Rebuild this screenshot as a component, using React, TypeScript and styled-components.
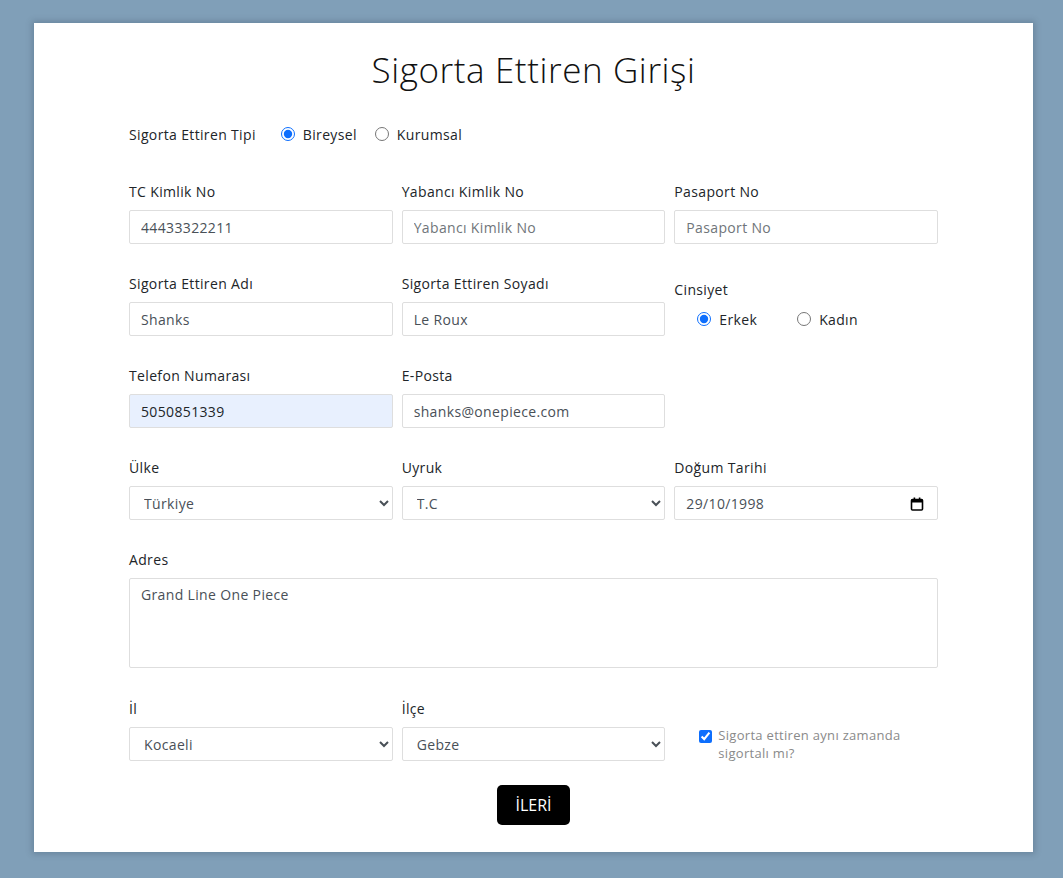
import React from "react";
import styled, { createGlobalStyle } from "styled-components";

const Global = createGlobalStyle`
  html, body { margin: 0; padding: 0; background: #809fb8; }
  body { font-family: "Open Sans", "Noto Sans", sans-serif; color: #212529; }
  * { box-sizing: border-box; }
`;

const Page = styled.div`
  padding: 23px 30px 26px 34px;
  min-height: 878px;
`;

const Card = styled.div`
  background: #fff;
  box-shadow: 0 0 6px 2px rgba(40, 60, 80, 0.25);
  padding: 25px 95px 27px 95px;
`;

const Title = styled.h1`
  margin: 0;
  text-align: center;
  font-weight: 300;
  font-size: 35px;
  line-height: 43px;
  color: #111;
  letter-spacing: 0.6px;
`;

const TypeRow = styled.div`
  display: flex;
  align-items: center;
  margin-top: 31px;
  height: 24px;
  font-size: 14px;
  letter-spacing: 0.35px;
`;

const TypeLabel = styled.span`
  margin-right: 25px;
`;

const RadioLabel = styled.label<{ $gap?: number }>`
  display: inline-flex;
  align-items: center;
  font-size: 14px;
  letter-spacing: 0.35px;
  margin-right: ${(p) => p.$gap ?? 18}px;
  cursor: pointer;
  input {
    margin: 0 8px 0 0;
    width: 14px;
    height: 14px;
    accent-color: #0d6efd;
  }
`;

const Grid = styled.div<{ $top: number }>`
  display: grid;
  grid-template-columns: repeat(3, 1fr);
  column-gap: 9px;
  row-gap: 29px;
  margin-top: ${(p) => p.$top}px;
`;

const Field = styled.div<{ $span?: number; $shift?: number }>`
  display: flex;
  flex-direction: column;
  grid-column: span ${(p) => p.$span ?? 1};
  padding-top: ${(p) => p.$shift ?? 0}px;
`;

const Label = styled.label<{ $tight?: boolean }>`
  font-size: 14px;
  letter-spacing: 0.35px;
  line-height: 21px;
  margin-bottom: ${(p) => (p.$tight ? 0 : 8)}px;
  color: #212529;
`;

const inputBase = `
  width: 100%;
  height: 34px;
  border: 1px solid #dedede;
  border-radius: 2px;
  padding: 0 11px;
  font-family: "Open Sans", "Noto Sans", sans-serif;
  font-size: 14px;
  letter-spacing: 0.35px;
  color: #495057;
  background: #fff;
  outline: none;
  &::placeholder { color: #70757a; }
`;

const Input = styled.input<{ $filled?: boolean }>`
  ${inputBase}
  background: ${(p) => (p.$filled ? "#e8f0fe" : "#fff")};
  color: ${(p) => (p.$filled ? "#212529" : "#495057")};
`;

const DateBox = styled.div`
  position: relative;
  width: 100%;
`;

const CalendarIcon = styled.svg`
  position: absolute;
  right: 14px;
  top: 11px;
  width: 14px;
  height: 14px;
  pointer-events: none;
`;

const Select = styled.select`
  ${inputBase}
  padding: 0 6px 0 10px;
`;

const TextArea = styled.textarea`
  ${inputBase}
  height: 90px;
  padding: 6px 11px;
  resize: none;
  line-height: 20px;
`;

const GenderRow = styled.div`
  display: flex;
  align-items: center;
  height: 34px;
  padding-left: 23px;
  margin-top: 2px;
`;

const CheckWrap = styled.label`
  display: flex;
  align-items: center;
  height: 34px;
  margin-top: 29px;
  padding-left: 25px;
  font-size: 13px;
  line-height: 18px;
  letter-spacing: 0.3px;
  color: #8a8a8a;
  input {
    margin: 0 6px 0 0;
    width: 13px;
    height: 13px;
    accent-color: #0d6efd;
    flex-shrink: 0;
    align-self: flex-start;
    margin-top: 3px;
  }
  span { max-width: 196px; }
`;

const ButtonRow = styled.div`
  display: flex;
  justify-content: center;
  margin-top: 24px;
`;

const Button = styled.button`
  background: #000;
  color: #fff;
  border: none;
  border-radius: 5px;
  height: 40px;
  padding: 0 18px;
  font-family: "Open Sans", "Noto Sans", sans-serif;
  font-size: 16px;
  cursor: pointer;
`;

export default function App() {
  return (
    <Page>
      <Global />
      <Card>
        <Title>Sigorta Ettiren Girişi</Title>
        <TypeRow>
          <TypeLabel>Sigorta Ettiren Tipi</TypeLabel>
          <RadioLabel>
            <input type="radio" name="tip" defaultChecked />
            Bireysel
          </RadioLabel>
          <RadioLabel>
            <input type="radio" name="tip" />
            Kurumsal
          </RadioLabel>
        </TypeRow>

        <Grid $top={35}>
          <Field>
            <Label>TC Kimlik No</Label>
            <Input defaultValue="44433322211" />
          </Field>
          <Field>
            <Label>Yabancı Kimlik No</Label>
            <Input placeholder="Yabancı Kimlik No" />
          </Field>
          <Field>
            <Label>Pasaport No</Label>
            <Input placeholder="Pasaport No" />
          </Field>

          <Field>
            <Label>Sigorta Ettiren Adı</Label>
            <Input defaultValue="Shanks" />
          </Field>
          <Field>
            <Label>Sigorta Ettiren Soyadı</Label>
            <Input defaultValue="Le Roux" />
          </Field>
          <Field $shift={6}>
            <Label $tight>Cinsiyet</Label>
            <GenderRow>
              <RadioLabel $gap={40}>
                <input type="radio" name="cins" defaultChecked />
                Erkek
              </RadioLabel>
              <RadioLabel>
                <input type="radio" name="cins" />
                Kadın
              </RadioLabel>
            </GenderRow>
          </Field>

          <Field>
            <Label>Telefon Numarası</Label>
            <Input $filled defaultValue="5050851339" />
          </Field>
          <Field>
            <Label>E-Posta</Label>
            <Input defaultValue="shanks@onepiece.com" />
          </Field>
          <Field />

          <Field>
            <Label>Ülke</Label>
            <Select defaultValue="tr">
              <option value="tr">Türkiye</option>
            </Select>
          </Field>
          <Field>
            <Label>Uyruk</Label>
            <Select defaultValue="tc">
              <option value="tc">T.C</option>
            </Select>
          </Field>
          <Field>
            <Label>Doğum Tarihi</Label>
            <DateBox>
              <Input defaultValue="29/10/1998" />
              <CalendarIcon viewBox="0 0 14 14" fill="none">
                <rect x="1.5" y="2.5" width="11" height="10.5" rx="1" stroke="#000" strokeWidth="1.6" />
                <rect x="1.5" y="2.5" width="11" height="3" fill="#000" />
                <rect x="3.6" y="0.5" width="1.6" height="3" fill="#000" />
                <rect x="8.8" y="0.5" width="1.6" height="3" fill="#000" />
              </CalendarIcon>
            </DateBox>
          </Field>

          <Field $span={3}>
            <Label>Adres</Label>
            <TextArea defaultValue="Grand Line One Piece" spellCheck={false} />
          </Field>
        </Grid>

        <Grid $top={30}>
          <Field>
            <Label>İl</Label>
            <Select defaultValue="k">
              <option value="k">Kocaeli</option>
            </Select>
          </Field>
          <Field>
            <Label>İlçe</Label>
            <Select defaultValue="g">
              <option value="g">Gebze</option>
            </Select>
          </Field>
          <CheckWrap>
            <input type="checkbox" defaultChecked />
            <span>Sigorta ettiren aynı zamanda sigortalı mı?</span>
          </CheckWrap>
        </Grid>

        <ButtonRow>
          <Button>İLERİ</Button>
        </ButtonRow>
      </Card>
    </Page>
  );
}
